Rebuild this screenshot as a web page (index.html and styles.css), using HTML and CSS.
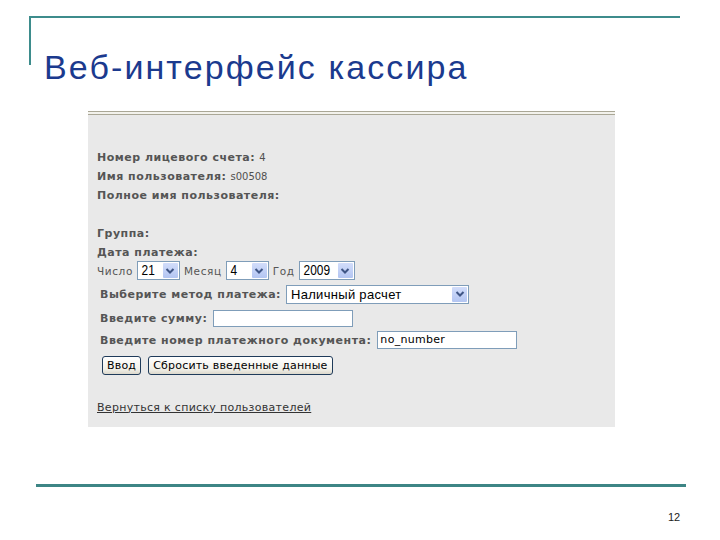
FILE: index.html
```html
<!DOCTYPE html>
<html lang="ru">
<head>
<meta charset="utf-8">
<link rel="stylesheet" href="styles.css">
</head>
<body>
<div class="slide">
  <div class="bracket"></div>
  <h1 class="title">Веб-интерфейс кассира</h1>
  <div class="panel">
    <div class="content">
      <div class="row info"><b>Номер лицевого счета:</b> <span class="val">4</span></div>
      <div class="row info"><b>Имя пользователя:</b> <span class="val">s00508</span></div>
      <div class="row info"><b>Полное имя пользователя:</b></div>
      <div class="row info group"><b>Группа:</b></div>
      <div class="row info date"><b>Дата платежа:</b></div>
      <div class="row dates">
        <span class="small">Число</span>
        <span class="select w-day"><span class="sel-text">21</span><span class="arrow"><svg viewBox="0 0 10 8" width="10" height="8"><path d="M1.5 2 L5 5.5 L8.5 2" fill="none" stroke="#3f5585" stroke-width="2"/></svg></span></span>
        <span class="small">Месяц</span>
        <span class="select w-day"><span class="sel-text">4</span><span class="arrow"><svg viewBox="0 0 10 8" width="10" height="8"><path d="M1.5 2 L5 5.5 L8.5 2" fill="none" stroke="#3f5585" stroke-width="2"/></svg></span></span>
        <span class="small">Год</span>
        <span class="select w-year"><span class="sel-text">2009</span><span class="arrow"><svg viewBox="0 0 10 8" width="10" height="8"><path d="M1.5 2 L5 5.5 L8.5 2" fill="none" stroke="#3f5585" stroke-width="2"/></svg></span></span>
      </div>
      <div class="row field method">
        <b>Выберите метод платежа:</b>
        <span class="select w-method"><span class="sel-text method-text">Наличный расчет</span><span class="arrow"><svg viewBox="0 0 10 8" width="10" height="8"><path d="M1.5 2 L5 5.5 L8.5 2" fill="none" stroke="#3f5585" stroke-width="2"/></svg></span></span>
      </div>
      <div class="row field sum">
        <b>Введите сумму:</b>
        <span class="input"></span>
      </div>
      <div class="row field doc">
        <b>Введите номер платежного документа:</b>
        <span class="input doc-input">no_number</span>
      </div>
      <div class="row buttons">
        <span class="btn">Ввод</span>
        <span class="btn">Сбросить введенные данные</span>
      </div>
      <div class="row link-row"><a class="back" href="#">Вернуться к списку пользователей</a></div>
    </div>
  </div>
  <div class="footer-line"></div>
  <div class="page-num">12</div>
</div>
</body>
</html>
```

FILE: styles.css
```css
html, body {
  margin: 0;
  padding: 0;
  background: #ffffff;
}

.slide {
  width: 720px;
  height: 540px;
  padding-top: 16px;
  box-sizing: border-box;
  position: relative;
  overflow: hidden;
}

.bracket {
  margin-left: 29px;
  width: 649px;
  height: 47px;
  border-top: 2px solid #3d8c8c;
  border-left: 2px solid #3d8c8c;
}

.title {
  margin: -18px 0 0 44px;
  font-family: "Liberation Sans", Arial, sans-serif;
  font-weight: normal;
  font-size: 34px;
  line-height: 40px;
  color: #1b3a8e;
  letter-spacing: 2.1px;
}

.panel {
  margin: 24px 0 0 88px;
  width: 527px;
  height: 316px;
  box-sizing: border-box;
  background: #e9e9e9;
  border-top: 1px solid #aaa796;
  position: relative;
}

.panel::before {
  content: "";
  display: block;
  height: 2px;
  background: #f3f2ec;
  border-bottom: 1px solid #aaa796;
}

.content {
  padding: 33px 0 0 9px;
  font-family: "DejaVu Sans", Verdana, sans-serif;
  font-size: 11px;
  color: #555555;
}

.row {
  display: flex;
  align-items: center;
  white-space: nowrap;
}

.row b {
  font-weight: bold;
  letter-spacing: 0.5px;
}

.info {
  height: 19px;
  gap: 4px;
}

.val {
  font-size: 10px;
  color: #505050;
}

.group {
  margin-top: 19px;
}

.date {
  height: 18px;
}

.dates {
  height: 19px;
  gap: 4px;
}

.small {
  font-size: 10.5px;
  letter-spacing: 0.6px;
  color: #555555;
}

.select {
  display: flex;
  align-items: stretch;
  height: 19px;
  box-sizing: border-box;
  border: 1px solid #7f9db9;
  background: #ffffff;
  padding: 1px;
}

.w-day { width: 43px; }
.w-year { width: 56px; }
.w-method { width: 183px; }

.sel-text {
  flex: 1;
  font-family: "Liberation Sans", Arial, sans-serif;
  font-size: 14px;
  line-height: 15px;
  color: #000000;
  padding-left: 3px;
  transform: scaleX(0.85);
  transform-origin: left center;
}

.method-text {
  font-size: 13px;
  letter-spacing: 0.3px;
  transform: none;
}

.arrow {
  width: 15px;
  display: flex;
  align-items: center;
  justify-content: center;
  background: linear-gradient(#d2ddfa, #b3c5f2);
  border-radius: 1px;
}

.field {
  padding-left: 3px;
  gap: 5px;
}

.method {
  margin-top: 5px;
  height: 18px;
}

.sum {
  margin-top: 7px;
  height: 17px;
}

.doc {
  margin-top: 4px;
  height: 18px;
}

.input {
  display: block;
  width: 140px;
  height: 17px;
  box-sizing: border-box;
  border: 1px solid #7f9db9;
  background: #ffffff;
  color: #000000;
  font-size: 11px;
  letter-spacing: 0.3px;
  line-height: 15px;
  padding-left: 2px;
}

.sum .input { margin-left: 1px; }
.doc-input { height: 18px; line-height: 16px; margin-left: 1px; }

.buttons {
  margin-top: 7px;
  height: 19px;
  padding-left: 5px;
  gap: 7px;
}

.btn {
  display: block;
  height: 19px;
  box-sizing: border-box;
  padding: 0 4px;
  border: 1px solid #1f3b5a;
  border-radius: 3px;
  background: linear-gradient(#ffffff, #f2f1ea 70%, #dcd8cc);
  color: #000000;
  font-size: 11px;
  letter-spacing: 0.2px;
  line-height: 17px;
}

.link-row {
  margin-top: 23px;
  height: 18px;
}

.back {
  color: #333333;
  font-size: 11px;
  letter-spacing: 0.3px;
  text-decoration: underline;
}

.footer-line {
  margin: 57px 0 0 36px;
  width: 650px;
  height: 3px;
  background: #3d8585;
}

.page-num {
  margin: 24px 0 0 668px;
  font-family: "Liberation Sans", Arial, sans-serif;
  font-size: 11px;
  color: #222222;
}
```
